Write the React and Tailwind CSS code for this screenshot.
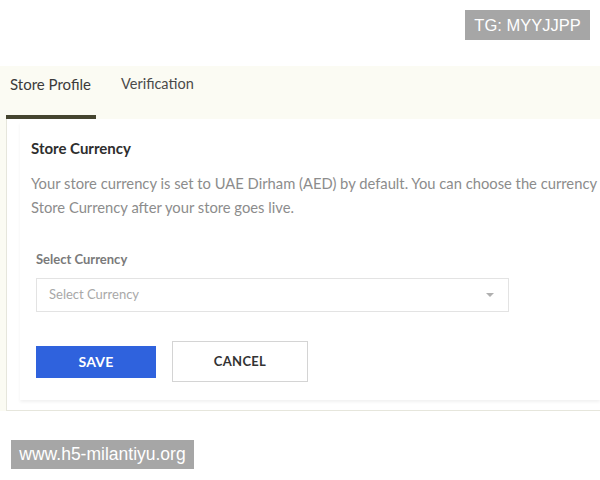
export default function App() {
  return (
    <div className="relative w-[600px] h-[480px] overflow-hidden bg-white" style={{ fontFamily: "Lato, 'Open Sans', sans-serif" }}>
      <div className="h-[66px]" />
      <div className="h-[53px] bg-[#fbfbf3] flex items-stretch">
        <div className="ml-[6px] w-[90px] flex flex-col">
          <div className="flex-1 pt-[8px] pl-[4px] text-[15px] leading-[20px] text-[#3a3a3a]">Store Profile</div>
          <div className="h-[4px] bg-[#45452f]" />
        </div>
        <div className="ml-[25px] pt-[8px] text-[14.5px] leading-[20px] text-[#4a4a4a]">Verification</div>
      </div>
      <div className="flex h-[292px]">
        <div className="w-[6px] bg-[#fbfbf3]" />
        <div className="flex-1 border-l border-b border-[#e6e6dc] bg-white pt-[3px] pb-[10px]">
          <div className="ml-[13px] h-full bg-white shadow-[0_2px_3px_rgba(0,0,0,0.06)] pl-[11px] pt-[16px]">
            <div className="text-[15px] font-bold text-[#2e2e2e] leading-[20px]">Store Currency</div>
            <div className="mt-[13px] text-[14.75px] leading-[24px] text-[#8c8c8c] whitespace-nowrap">
              Your store currency is set to UAE Dirham (AED) by default. You can choose the currency
              <br />
              Store Currency after your store goes live.
            </div>
            <div className="ml-[5px] mt-[31px] text-[13px] font-bold text-[#7a7a7a] leading-[18px]">Select Currency</div>
            <div className="ml-[5px] mt-[10px] w-[473px] h-[34px] border border-[#e3e3e3] flex items-center justify-between pl-[12px] pr-[14px]">
              <span className="text-[13px] text-[#a8a8a8]">Select Currency</span>
              <span className="w-0 h-0 border-l-[4px] border-r-[4px] border-t-[4px] border-l-transparent border-r-transparent border-t-[#b0b0b0]" />
            </div>
            <div className="ml-[5px] mt-[29px] flex items-center gap-[16px]">
              <button className="w-[120px] h-[32px] bg-[#2f62dd] text-white text-[14px] font-bold tracking-[0.2px]">SAVE</button>
              <button className="w-[136px] h-[41px] border border-[#d4d4d4] bg-white text-[#333] text-[13px] font-bold tracking-[0.3px]">CANCEL</button>
            </div>
          </div>
        </div>
      </div>
      <div className="absolute left-[465px] top-[10px] w-[125px] h-[30px] bg-[#a6a6a6] text-white text-[16.5px] flex items-center justify-center" style={{ fontFamily: "'Liberation Sans', Arial, sans-serif" }}>TG: MYYJJPP</div>
      <div className="absolute left-[11px] top-[440px] w-[183px] h-[29px] bg-[#a6a6a6] text-white text-[17.5px] flex items-center justify-center" style={{ fontFamily: "'Liberation Sans', Arial, sans-serif" }}>www.h5-milantiyu.org</div>
    </div>
  );
}
